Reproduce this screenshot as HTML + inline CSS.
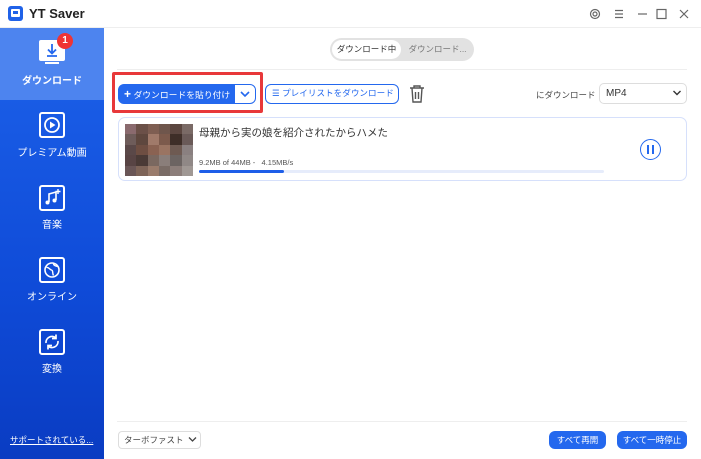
<!DOCTYPE html>
<html><head><meta charset="utf-8"><style>
*{box-sizing:border-box;margin:0;padding:0}
body{width:701px;height:459px;overflow:hidden;background:#fff;font-family:"Liberation Sans","Noto Sans CJK JP",sans-serif;position:relative;color:#333}
.abs{position:absolute;white-space:nowrap}
.side{left:0;top:28px;width:104px;height:431px;background:linear-gradient(180deg,#1d62ea 0%,#0f4bd8 60%,#0a3cc2 100%)}
.item{position:absolute;left:0;width:104px;text-align:center;color:#fff;font-size:10px;white-space:nowrap}
.ico{position:absolute;left:39px;width:26px;height:26px;border:2px solid #fff;border-radius:3px}
.btn{position:absolute;border-radius:6px;font-size:8.5px;color:#fff;background:#2468ee;display:flex;align-items:center;justify-content:center;white-space:nowrap}
</style></head><body>
<div class="abs" style="left:0;top:0;width:701px;height:28px;border-bottom:1px solid #eee"></div>
<div class="abs" style="left:8px;top:6px;width:15px;height:15px;background:#2062e8;border-radius:3px">
<div class="abs" style="left:3px;top:3px;width:9px;height:8px;background:#fff;border-radius:1px"></div>
<div class="abs" style="left:5px;top:5px;width:5px;height:3px;background:#2062e8"></div></div>
<div class="abs" style="left:29px;top:6px;font-size:13px;font-weight:bold;color:#222">YT Saver</div>
<svg class="abs" style="left:588px;top:6px" width="110" height="16" viewBox="0 0 110 16" fill="none" stroke="#666" stroke-width="1.2">
<circle cx="7" cy="8" r="4.5"/><circle cx="7" cy="8" r="2"/>
<path d="M27 4.5h8M27 8h8M27 11.5h8"/><path d="M50 8h9"/><rect x="69" y="3.5" width="9" height="9"/><path d="M92 4l8 8M100 4l-8 8"/></svg>
<div class="abs side"></div>
<div class="abs" style="left:0;top:28px;width:104px;height:72px;background:#4d84ef"></div>
<div class="abs" style="left:39px;top:40px;width:26px;height:21px;background:#fff;border-radius:2px"></div>
<div class="abs" style="left:45px;top:62px;width:14px;height:2px;background:#fff"></div>
<svg class="abs" style="left:39px;top:40px" width="26" height="21"><path d="M13 4v9M9 9.5l4 4 4-4M8 16h10" stroke="#2468ee" stroke-width="1.8" fill="none"/></svg>
<div class="abs" style="left:57px;top:33px;width:16px;height:16px;border-radius:8px;background:#ef3434;color:#fff;font-size:10px;font-weight:bold;text-align:center;line-height:16px">1</div>
<div class="item" style="top:72px;font-weight:bold">ダウンロード</div>
<div class="ico" style="top:112px"><svg width="22" height="22"><circle cx="11" cy="11" r="7" stroke="#fff" stroke-width="1.8" fill="none"/><path d="M9 7.5v7l5.5-3.5z" fill="#fff"/></svg></div>
<div class="item" style="top:144px">プレミアム動画</div>
<div class="ico" style="top:185px"><svg width="22" height="22"><path d="M8 15V7l7-2v8" stroke="#fff" stroke-width="1.6" fill="none"/><circle cx="6.5" cy="15.5" r="2" fill="#fff"/><circle cx="13.5" cy="13.5" r="2" fill="#fff"/><path d="M17 2v5M14.5 4.5h5" stroke="#fff" stroke-width="1.4"/></svg></div>
<div class="item" style="top:216px">音楽</div>
<div class="ico" style="top:257px"><svg width="22" height="22"><circle cx="11" cy="11" r="7" stroke="#fff" stroke-width="1.6" fill="none"/><path d="M5.5 8.5c2.5-.5 3 2 5 2.5s.5 3 2 5.5M12.5 4.5c0 2 2 2.5 4 3" stroke="#fff" stroke-width="1.4" fill="none"/></svg></div>
<div class="item" style="top:288px">オンライン</div>
<div class="ico" style="top:329px"><svg width="22" height="22" fill="none" stroke="#fff" stroke-width="1.7"><path d="M5 12a6 6 0 0 1 10-5M17 10a6 6 0 0 1-10 5"/><path d="M15 3.5v4h-4M7 18.5v-4h4"/></svg></div>
<div class="item" style="top:360px">変換</div>
<div class="abs" style="left:10px;top:434px;font-size:8.5px;color:#fff;text-decoration:underline">サポートされている...</div>
<div class="abs" style="left:330px;top:38px;width:144px;height:23px;border-radius:12px;background:#e2e2e2"></div>
<div class="abs" style="left:332px;top:40px;width:69px;height:19px;border-radius:10px;background:#fff;font-size:8.5px;color:#333;text-align:center;line-height:19px">ダウンロード中</div>
<div class="abs" style="left:403px;top:40px;width:69px;height:19px;font-size:8.5px;color:#777;text-align:center;line-height:19px">ダウンロード...</div>
<div class="abs" style="left:117px;top:69px;width:570px;height:1px;background:#eee"></div>
<div class="abs" style="left:112px;top:72px;width:151px;height:41px;border:3px solid #e8383a;border-radius:2px"></div>
<div class="abs" style="left:118px;top:84px;width:138px;height:20px;border-radius:6px;background:#2468ee;border:1px solid #2468ee"></div>
<div class="abs" style="left:124px;top:85px;font-size:8.8px;color:#fff;line-height:18px"><b style="font-size:12px">+</b> ダウンロードを貼り付け</div>
<div class="abs" style="left:235px;top:85px;width:20px;height:18px;background:#fff;border-radius:0 5px 5px 0"></div>
<svg class="abs" style="left:239px;top:89px" width="12" height="10"><path d="M2 3l4 4 4-4" stroke="#2468ee" stroke-width="1.6" fill="none"/></svg>
<div class="abs" style="left:265px;top:84px;width:134px;height:20px;border:1.5px solid #2468ee;border-radius:6px;font-size:8.6px;color:#2468ee;line-height:17px;padding-left:6px">☰ プレイリストをダウンロード</div>
<svg class="abs" style="left:408px;top:84px" width="18" height="20" fill="none" stroke="#555" stroke-width="1.4"><path d="M2 4h14M6 4V2h6v2M4 4l1 14h8l1-14M7.5 8v7M10.5 8v7"/></svg>
<div class="abs" style="left:536px;top:89px;font-size:8.5px;color:#444">にダウンロード</div>
<div class="abs" style="left:599px;top:83px;width:88px;height:21px;border:1px solid #ddd;border-radius:5px;font-size:10px;color:#333;line-height:19px;padding-left:6px">MP4</div>
<svg class="abs" style="left:672px;top:89px" width="10" height="8"><path d="M1.5 2l3.5 3.5 3.5-3.5" stroke="#333" stroke-width="1.4" fill="none"/></svg>
<div class="abs" style="left:118px;top:117px;width:569px;height:64px;border:1px solid #d6e0fb;border-radius:7px"></div>
<div class="abs" style="left:125px;top:124px;width:68px;height:52px;display:grid;grid-template-columns:repeat(6,1fr);grid-template-rows:repeat(5,1fr)">
<i style="background:#8a6a6e"></i><i style="background:#6b5048"></i><i style="background:#7e5e52"></i><i style="background:#6f564c"></i><i style="background:#5b4640"></i><i style="background:#7a6a66"></i>
<i style="background:#6e5c5a"></i><i style="background:#5e473e"></i><i style="background:#a07a6a"></i><i style="background:#7c5a4c"></i><i style="background:#3e2e28"></i><i style="background:#6a5a58"></i>
<i style="background:#5a4848"></i><i style="background:#6e4e42"></i><i style="background:#8a6252"></i><i style="background:#9a7462"></i><i style="background:#6e5a52"></i><i style="background:#8a8080"></i>
<i style="background:#584444"></i><i style="background:#4a3a36"></i><i style="background:#7a6860"></i><i style="background:#8a7e7a"></i><i style="background:#6c6462"></i><i style="background:#908886"></i>
<i style="background:#6a5656"></i><i style="background:#7e6458"></i><i style="background:#9a7c6c"></i><i style="background:#7a6c66"></i><i style="background:#8c7e7a"></i><i style="background:#a09894"></i>
</div>
<div class="abs" style="left:199px;top:125px;font-size:10.5px;color:#333">母親から実の娘を紹介されたからハメた</div>
<div class="abs" style="left:199px;top:158px;font-size:7.5px;color:#555">9.2MB of 44MB -&nbsp;&nbsp;&nbsp;4.15MB/s</div>
<div class="abs" style="left:199px;top:170px;width:405px;height:3px;border-radius:2px;background:#e6ecfb"></div>
<div class="abs" style="left:199px;top:170px;width:85px;height:3px;border-radius:2px;background:#1e5ee8"></div>
<div class="abs" style="left:640px;top:139px;width:21px;height:21px;border:1.8px solid #2468ee;border-radius:50%"></div>
<div class="abs" style="left:647px;top:145px;width:2px;height:9px;background:#2468ee"></div>
<div class="abs" style="left:652px;top:145px;width:2px;height:9px;background:#2468ee"></div>
<div class="abs" style="left:117px;top:421px;width:570px;height:1px;background:#eee"></div>
<div class="abs" style="left:118px;top:431px;width:83px;height:18px;border:1px solid #ddd;border-radius:4px;font-size:8.5px;color:#444;line-height:16px;padding-left:5px">ターボファスト</div>
<svg class="abs" style="left:188px;top:436px" width="9" height="7"><path d="M1 1.5l3.5 3.5 3.5-3.5" stroke="#444" stroke-width="1.3" fill="none"/></svg>
<div class="btn" style="left:549px;top:431px;width:57px;height:18px">すべて再開</div>
<div class="btn" style="left:617px;top:431px;width:70px;height:18px">すべて一時停止</div>
</body></html>
